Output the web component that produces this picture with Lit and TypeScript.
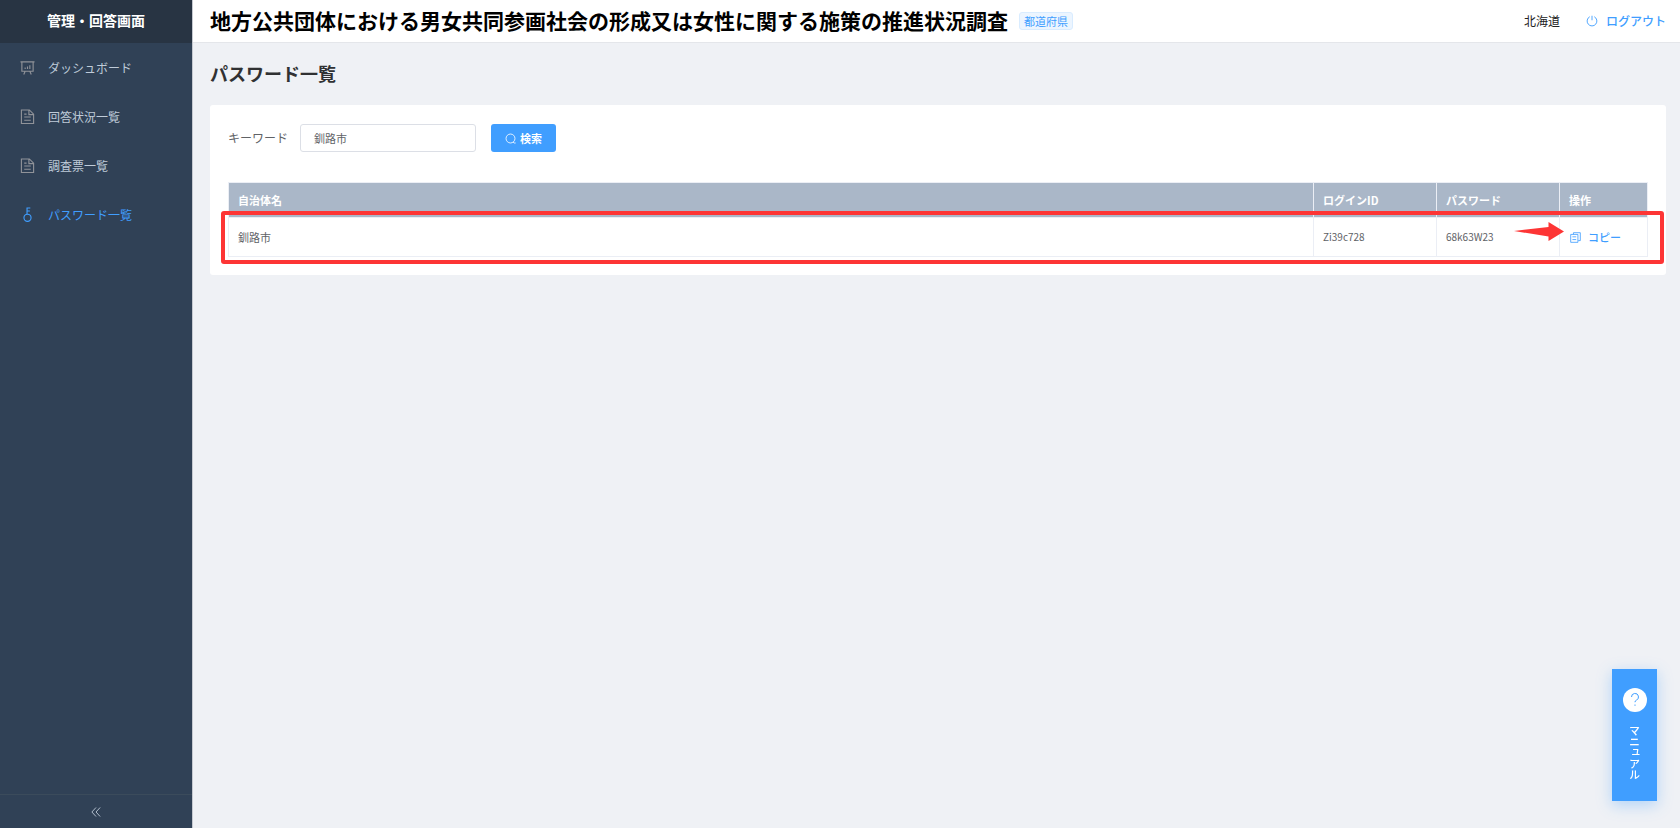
import { LitElement, html, css, svg } from "lit";
import { customElement, state } from "lit/decorators.js";
import { classMap } from "lit/directives/class-map.js";

const icons = {
  board: svg`<path d="M.5 2h15M2 2v10h12V2M5.500 12 4 15.500M10.500 12 12 15.500M5.500 9.500V8M8 9.500V7M10.500 9.500V5.500"/>`,
  doc: svg`<path d="M1.500 1h8.500l4.500 4.500v10h-13zM9.500 1v5h5M4.500 5.500h2.500M4.500 8.500h7M4.500 12h7"/>`,
  key: svg`<circle cx="8" cy="11.500" r="3.800"/><path d="M7.500 7.700V1h3.500M7.500 4.200h3"/>`,
  lens: svg`<circle cx="8" cy="8" r="6.500"/><path d="m11.500 13 2 1.500h2"/>`,
  copy: svg`<path d="M5 3.500V1h10v11.500h-3M1 3.500h10.500V15H1zM3.500 7h5.500M3.500 11h5.500"/>`,
  power: svg`<path d="M5 2.300a6.500 6.500 0 1 0 6 0M8 1v6"/>`,
  collapse: svg`<path d="M8 2 2.500 8 8 14M13.500 2 8 8l5.500 6"/>`,
};

type IconName = keyof typeof icons;

const icon = (name: IconName) =>
  html`<svg class="icon" viewBox="0 0 16 16" aria-hidden="true">${icons[name]}</svg>`;

const menu: { label: string; icon: IconName; active?: boolean }[] = [
  { label: "ダッシュボード", icon: "board" },
  { label: "回答状況一覧", icon: "doc" },
  { label: "調査票一覧", icon: "doc" },
  { label: "パスワード一覧", icon: "key", active: true },
];

const rows = [{ name: "釧路市", login: "Zi39c728", password: "68k63W23" }];

@customElement("app-root")
export class AppRoot extends LitElement {
  @state() private keyword = "釧路市";

  static styles = css`
    :host {
      display: flex;
      min-height: 100vh;
      background: #eff1f5;
      color: #606266;
      font: 12px/18px "Noto Sans CJK JP", sans-serif;
    }
    * { box-sizing: border-box; }
    button, input { font: inherit; }
    button { cursor: pointer; }
    a { text-decoration: none; }
    .icon {
      width: 14px;
      height: 14px;
      flex: none;
      fill: none;
      stroke: currentColor;
      stroke-width: 1.2;
    }

    .sidebar {
      display: flex;
      flex-direction: column;
      flex: none;
      width: 193px;
      background: #304156;
      border-right: 1px solid #c5c9d0;
    }
    .brand {
      padding: 9px 0 11px;
      background: #283443;
      color: #fff;
      font-size: 14px;
      line-height: 23px;
      font-weight: 700;
      text-align: center;
    }
    .menu {
      display: flex;
      flex-direction: column;
      flex: 1;
    }
    .item {
      display: flex;
      align-items: center;
      gap: 13px;
      height: 49px;
      padding: 0 20px;
      color: #bfcbd9;
    }
    .item .icon { width: 15px; height: 15px; color: #909399; }
    .item.active, .item.active .icon { color: #409eff; }
    .collapse-button {
      display: flex;
      align-items: center;
      justify-content: center;
      height: 34px;
      padding: 0;
      border: 0;
      border-top: 1px solid #3b4b5b;
      background: none;
      color: #bfcbd9;
    }
    .collapse-button .icon { width: 12px; height: 12px; }

    .page { flex: 1; min-width: 0; }
    .topbar {
      display: flex;
      align-items: center;
      height: 43px;
      padding: 0 14px 0 17px;
      background: #fff;
      border-bottom: 1px solid #e4e6ea;
    }
    h1 {
      margin: 0;
      padding-bottom: 2px;
      color: #000;
      font-size: 21px;
      line-height: 30px;
      font-weight: 700;
      white-space: nowrap;
    }
    .tag {
      margin-left: 11px;
      padding: 0 4px;
      border: 1px solid #d9ecff;
      border-radius: 3px;
      background: #ecf5ff;
      color: #409eff;
      font-size: 11px;
      line-height: 16px;
      white-space: nowrap;
    }
    .user { margin-left: auto; color: #222; white-space: nowrap; }
    .logout {
      display: flex;
      align-items: center;
      gap: 8px;
      margin-left: 26px;
      color: #409eff;
      font-weight: 500;
      white-space: nowrap;
    }
    .logout .icon { width: 12px; height: 12px; }

    .content { padding: 17px 14px 18px 17px; }
    h2 {
      margin: 0 0 19px;
      color: #303133;
      font-size: 18px;
      line-height: 26px;
      font-weight: 700;
    }
    .card {
      padding: 19px 18px 18px;
      border-radius: 3px;
      background: #fff;
    }
    .search { display: flex; align-items: center; margin-bottom: 30px; }
    .search input {
      width: 176px;
      height: 28px;
      margin: 0 15px 0 12px;
      padding: 0 13px;
      border: 1px solid #dcdfe6;
      border-radius: 3px;
      background: #fff;
      color: #606266;
      font-size: 11px;
      outline: none;
    }
    .search-button {
      display: flex;
      align-items: center;
      gap: 4px;
      height: 28px;
      padding: 0 14px;
      border: 0;
      border-radius: 3px;
      background: #409eff;
      color: #fff;
      font-size: 11px;
      font-weight: 700;
    }
    .search-button .icon { width: 11px; height: 11px; }

    .table-area { position: relative; }
    table {
      width: 100%;
      border-collapse: collapse;
      table-layout: fixed;
      font-size: 11px;
      line-height: 16px;
    }
    th, td { padding: 0 9px; border: 1px solid #ebeef5; text-align: left; }
    th { height: 35px; background: #aab7c8; color: #fff; font-weight: 700; }
    td { height: 39px; }
    .code { font-size: 10px; }
    .wide { width: 123px; }
    .narrow { width: 88px; }
    .copy-button {
      display: flex;
      align-items: center;
      gap: 7px;
      padding: 0 1px;
      border: 0;
      background: none;
      color: #409eff;
      font-size: 11px;
      line-height: 16px;
      font-weight: 500;
    }
    .copy-button .icon { width: 11px; height: 11px; }
    .callout {
      position: absolute;
      top: 29px;
      right: -16px;
      bottom: -7px;
      left: -7px;
      border: 4px solid #fd3535;
      border-radius: 3px;
      pointer-events: none;
    }
    .arrow {
      position: absolute;
      top: 7px;
      right: 96px;
      width: 50px;
      height: 19px;
      fill: #fd3535;
    }

    .manual {
      position: fixed;
      right: 23px;
      bottom: 27px;
      display: flex;
      flex-direction: column;
      align-items: center;
      gap: 13px;
      width: 45px;
      height: 132px;
      padding: 19px 0 0;
      border: 0;
      background: #409eff;
      color: #fff;
      box-shadow: 0 4px 14px rgba(64, 158, 255, 0.35);
      font-size: 11px;
      line-height: 16px;
      font-weight: 500;
    }
    .help { width: 24px; height: 24px; fill: none; stroke: #409eff; }
    .help .disc { fill: #fff; stroke: none; }
    .manual-label { writing-mode: vertical-rl; }
  `;

  render() {
    return html`
      <aside class="sidebar">
        <div class="brand">管理・回答画面</div>
        <nav class="menu">
          ${menu.map(
            (m) => html`<a href="#" class=${classMap({ item: true, active: !!m.active })}
              >${icon(m.icon)}<span>${m.label}</span></a
            >`
          )}
        </nav>
        <button class="collapse-button" aria-label="メニューを閉じる">${icon("collapse")}</button>
      </aside>
      <div class="page">
        <header class="topbar">
          <h1>地方公共団体における男女共同参画社会の形成又は女性に関する施策の推進状況調査</h1>
          <span class="tag">都道府県</span>
          <span class="user">北海道</span>
          <a class="logout" href="#">${icon("power")}<span>ログアウト</span></a>
        </header>
        <main class="content">
          <h2>パスワード一覧</h2>
          <section class="card">
            <form class="search" @submit=${(e: Event) => e.preventDefault()}>
              <label for="keyword">キーワード</label>
              <input
                id="keyword"
                type="text"
                .value=${this.keyword}
                @input=${(e: Event) => (this.keyword = (e.target as HTMLInputElement).value)}
              />
              <button class="search-button">${icon("lens")}<span>検索</span></button>
            </form>
            <div class="table-area">
              <table>
                <colgroup><col /><col class="wide" /><col class="wide" /><col class="narrow" /></colgroup>
                <thead>
                  <tr>
                    <th>自治体名</th>
                    <th>ログインID</th>
                    <th>パスワード</th>
                    <th>操作</th>
                  </tr>
                </thead>
                <tbody>
                  ${rows.map(
                    (r) => html`<tr>
                      <td>${r.name}</td>
                      <td class="code">${r.login}</td>
                      <td class="code">${r.password}</td>
                      <td>
                        <button class="copy-button">${icon("copy")}<span>コピー</span></button>
                      </td>
                    </tr>`
                  )}
                </tbody>
              </table>
              <div class="callout">
                <svg class="arrow" viewBox="0 0 50 19" aria-hidden="true">
                  <path d="M0 9 34.500 5V0L50 9.500 34.500 19V14.500z" />
                </svg>
              </div>
            </div>
          </section>
        </main>
      </div>
      <button class="manual">
        <svg class="help" viewBox="0 0 24 24" aria-hidden="true">
          <circle class="disc" cx="12" cy="12" r="12" />
          <path d="M8.500 9a3.500 3.500 0 1 1 4.800 3.200q-1.300.6-1.300 2M12 16.500v1.300" />
        </svg>
        <span class="manual-label">マニュアル</span>
      </button>
    `;
  }
}
